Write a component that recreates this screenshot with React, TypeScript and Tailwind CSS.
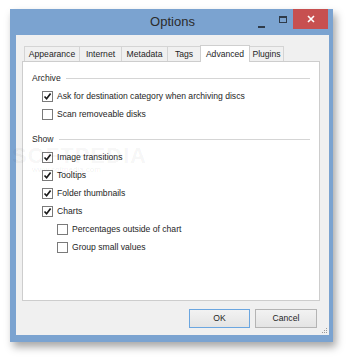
import React from 'react';

const font = { fontFamily: '"Liberation Sans", Arial, sans-serif' };

function Check({ checked }: { checked?: boolean }) {
  return (
    <div className="w-[11px] h-[11px] border border-[#7a7a7a] bg-white flex items-center justify-center shrink-0">
      {checked && (
        <svg width="9" height="9" viewBox="0 0 9 9">
          <path d="M1.5 4.5 L3.6 6.8 L7.6 1.6" fill="none" stroke="#1a1a1a" strokeWidth="1.7" />
        </svg>
      )}
    </div>
  );
}

function Row({ label, checked, indent }: { label: string; checked?: boolean; indent?: boolean }) {
  return (
    <div className={`h-[18px] flex items-center gap-[4px] ${indent ? 'pl-[34px]' : 'pl-[19px]'}`}>
      <Check checked={checked} />
      <span className="text-[8.6px] text-[#1e1e1e]">{label}</span>
    </div>
  );
}

function Group({ title }: { title: string }) {
  return (
    <div className="h-[18px] flex items-center pl-[9px] pr-[9px]">
      <span className="text-[8.6px] text-[#1e1e1e]">{title}</span>
      <div className="flex-1 h-px bg-[#d5d5d5] ml-[5px]" />
    </div>
  );
}

export default function App() {
  const tabs = [
    { t: 'Appearance', w: 'w-[56px]' },
    { t: 'Internet', w: 'w-[43px]' },
    { t: 'Metadata', w: 'w-[47px]' },
    { t: 'Tags', w: 'w-[34px]' },
  ];
  return (
    <div className="w-[350px] h-[358px] bg-white pl-[10px] pt-[9px] relative overflow-hidden" style={font}>
      <div className="w-[323px] h-[333px] bg-[#7ba3d0] flex flex-col shadow-[3px_5px_8px_rgba(0,0,0,0.35)]">
        {/* title bar */}
        <div className="h-[26px] relative flex items-center justify-center">
          <span className="text-[13px] text-[#2b2b2b] pl-[2px]">Options</span>
          <div className="absolute left-[248px] top-[17px] w-[7px] h-[2px] bg-[#2f3b4a]" />
          <div className="absolute left-[269px] top-[7px] w-[8px] h-[7px] border border-[#2f3b4a] border-t-2" />
          <div className="absolute right-[5px] top-0 w-[35px] h-[20px] bg-[#c75050] flex items-center justify-center">
            <svg width="8" height="8" viewBox="0 0 8 8">
              <path d="M1 1 L7 7 M7 1 L1 7" stroke="white" strokeWidth="1.6" />
            </svg>
          </div>
        </div>

        {/* client area */}
        <div className="flex-1 ml-[6px] mr-[4px] mb-[7px] bg-[#f0f0f0] flex flex-col pt-[9px] relative">
          <div className="h-[17px] flex items-end ml-[8px] relative z-10">
            {tabs.map(({ t, w }) => (
              <div key={t} className={`${w} h-[15px] border border-b-0 border-[#d4d4d4] -ml-px first:ml-0 bg-[#f0f0f0] flex items-center justify-center`}>
                <span className="text-[8.6px] text-[#1e1e1e]">{t}</span>
              </div>
            ))}
            <div className="h-[17px] w-[50px] -ml-px border border-b-0 border-[#cfcfcf] bg-white flex items-start justify-center pt-[2px] translate-y-px">
              <span className="text-[8.6px] text-[#1e1e1e]">Advanced</span>
            </div>
            <div className="w-[35px] h-[15px] -ml-px border border-b-0 border-[#d4d4d4] bg-[#f0f0f0] flex items-center justify-center">
              <span className="text-[8.6px] text-[#1e1e1e]">Plugins</span>
            </div>
          </div>

          <div className="ml-[6px] w-[298px] h-[240px] border border-[#cdcdcd] bg-white pt-[7px]">
            <Group title="Archive" />
            <Row label="Ask for destination category when archiving discs" checked />
            <Row label="Scan removeable disks" />
            <div className="h-[7px]" />
            <Group title="Show" />
            <Row label="Image transitions" checked />
            <Row label="Tooltips" checked />
            <Row label="Folder thumbnails" checked />
            <Row label="Charts" checked />
            <Row label="Percentages outside of chart" indent />
            <Row label="Group small values" indent />
          </div>

          <div className="flex justify-end gap-[5px] mr-[12px] mt-[8px]">
            <button className="w-[61px] h-[19px] border border-[#6ba6e0] bg-gradient-to-b from-[#f2f2f2] to-[#e4e4e4] text-[8.6px] text-[#1e1e1e]">
              OK
            </button>
            <button className="w-[62px] h-[19px] border border-[#b4b4b4] bg-gradient-to-b from-[#f2f2f2] to-[#e4e4e4] text-[8.6px] text-[#1e1e1e]">
              Cancel
            </button>
          </div>

          <svg className="absolute right-[1px] bottom-[1px]" width="6" height="6" viewBox="0 0 6 6">
            <rect x="4" y="0" width="1" height="1" fill="#9a9a9a" />
            <rect x="2" y="2" width="1" height="1" fill="#9a9a9a" />
            <rect x="4" y="2" width="1" height="1" fill="#9a9a9a" />
            <rect x="0" y="4" width="1" height="1" fill="#9a9a9a" />
            <rect x="2" y="4" width="1" height="1" fill="#9a9a9a" />
            <rect x="4" y="4" width="1" height="1" fill="#9a9a9a" />
          </svg>
        </div>
      </div>

      {/* watermark */}
      <div className="absolute left-[12px] top-[139px] text-[22px] font-bold tracking-[1px] text-[#000000]/[0.05] pointer-events-none">
        SOFTPEDIA
      </div>
      <div className="absolute left-[32px] top-[164px] text-[8px] text-[#000000]/[0.07] pointer-events-none">
        www.softpedia.com
      </div>
    </div>
  );
}
